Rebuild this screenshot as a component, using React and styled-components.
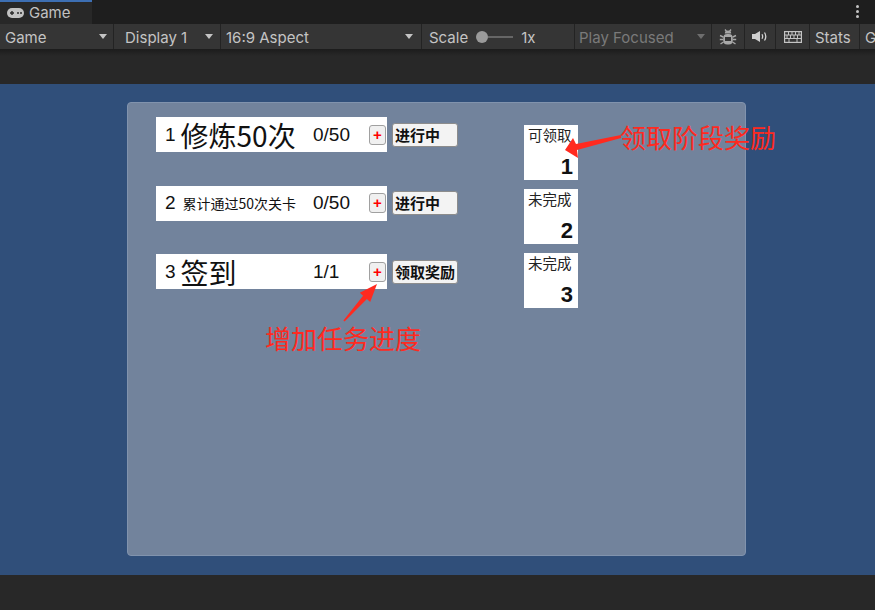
import React from 'react'
import styled, { createGlobalStyle } from 'styled-components'

const Global = createGlobalStyle`
  html, body { margin: 0; padding: 0; background: #282828; overflow: hidden; }
  #root { width: 875px; height: 610px; }
`

const Page = styled.div`
  width: 875px;
  height: 610px;
  display: flex;
  flex-direction: column;
  font-family: Inter, "Noto Sans", sans-serif;
  color: #c4c4c4;
`

const TabStrip = styled.div`
  height: 24px;
  flex: none;
  background: #1e1e1e;
  display: flex;
  justify-content: space-between;
`

const Tab = styled.div`
  width: 92px;
  box-sizing: border-box;
  border-top: 2px solid #3d6fb3;
  background: #282828;
  display: flex;
  align-items: center;
  gap: 5px;
  padding: 0 0 1px 7px;
  font-size: 15px;
  color: #c2c2c2;
`

const Kebab = styled.div`
  width: 4px;
  margin: 5px 15px 0 0;
  display: flex;
  flex-direction: column;
  gap: 2px;
  span {
    width: 3px;
    height: 3px;
    border-radius: 50%;
    background: #c4c4c4;
  }
`

const Toolbar = styled.div`
  height: 25px;
  flex: none;
  display: flex;
  gap: 1px;
  background: #232323;
`

const ToolCell = styled.div`
  width: ${p => p.$w}px;
  flex: ${p => (p.$grow ? 1 : 'none')};
  box-sizing: border-box;
  background: #353535;
  display: flex;
  align-items: center;
  justify-content: ${p => (p.$center ? 'center' : 'space-between')};
  padding: ${p => (p.$center ? 0 : 2)}px ${p => p.$pr ?? 0}px 0 ${p => p.$pl ?? 0}px;
  font-size: 15px;
  color: ${p => (p.$dim ? '#7a7a7a' : '#c4c4c4')};
  white-space: nowrap;
  overflow: hidden;
`

const DropArrow = styled.span`
  width: 0;
  height: 0;
  margin-bottom: 2px;
  border-left: 4px solid transparent;
  border-right: 4px solid transparent;
  border-top: 5px solid ${p => (p.$dim ? '#6e6e6e' : '#c4c4c4')};
`

const Slider = styled.div`
  display: flex;
  align-items: center;
  gap: 8px;
`

const Track = styled.div`
  width: 37px;
  height: 12px;
  margin-bottom: 2px;
  display: flex;
  align-items: center;
  &::before {
    content: '';
    width: 12px;
    height: 12px;
    border-radius: 50%;
    background: #9a9a9a;
    flex: none;
  }
  &::after {
    content: '';
    flex: 1;
    height: 2px;
    background: #666;
  }
`

const GapBar = styled.div`
  height: 35px;
  flex: none;
  background: linear-gradient(#1c1c1c, #282828 7px);
`

const Viewport = styled.div`
  flex: 1;
  position: relative;
  background: #304f7a;
  padding: 18px 0 0 127px;
  box-sizing: border-box;
`

const Panel = styled.div`
  width: 619px;
  height: 454px;
  box-sizing: border-box;
  border: 1px solid #8193ad;
  border-radius: 4px;
  background: #72839c;
  padding: 14px 0 0 28px;
  display: flex;
  align-items: flex-start;
`

const TaskList = styled.div`
  display: flex;
  flex-direction: column;
  gap: 33.5px;
`

const TaskRow = styled.div`
  display: flex;
  align-items: center;
  gap: 5px;
`

const TaskBox = styled.div`
  width: 231px;
  height: 35px;
  box-sizing: border-box;
  background: #fff;
  display: flex;
  align-items: center;
  padding: 0 1px 0 9px;
  color: #111;
`

const Title = styled.div`
  width: 148px;
  display: flex;
  align-items: center;
  white-space: nowrap;
`

const Index = styled.span`
  font-family: "Liberation Sans", Arial, sans-serif;
  font-size: 19px;
  margin-right: ${p => p.$gap}px;
`

const Label = styled.span`
  font-family: "Noto Sans CJK SC", sans-serif;
  font-size: ${p => p.$size}px;
  line-height: 1;
`

const Progress = styled.span`
  font-family: "Liberation Sans", Arial, sans-serif;
  font-size: 19px;
`

const PlusButton = styled.div`
  margin-left: auto;
  width: 17px;
  height: 20px;
  box-sizing: border-box;
  border: 1px solid #a0a0a0;
  border-radius: 3px;
  background: #f0f0f0;
  color: #f00;
  font-family: "Liberation Sans", Arial, sans-serif;
  font-weight: bold;
  font-size: 15px;
  line-height: 18px;
  text-align: center;
`

const StatusButton = styled.div`
  width: 66px;
  height: 24px;
  box-sizing: border-box;
  border: 1px solid #8c8c8c;
  border-radius: 3px;
  background: #f3f3f3;
  padding-left: 2px;
  font-family: "Noto Sans CJK SC", sans-serif;
  font-weight: bold;
  font-size: 15px;
  line-height: 22px;
  color: #111;
  white-space: nowrap;
`

const RewardList = styled.div`
  margin: 8px 0 0 66px;
  display: flex;
  flex-direction: column;
  gap: 9px;
`

const RewardBox = styled.div`
  width: 54px;
  height: 55px;
  box-sizing: border-box;
  background: #fff;
  padding: 1px 5px 2px 4px;
  display: flex;
  flex-direction: column;
  justify-content: space-between;
`

const RewardState = styled.span`
  font-family: "Noto Sans CJK SC", sans-serif;
  font-size: 14.5px;
  line-height: 18px;
  color: #222;
  white-space: nowrap;
`

const RewardNum = styled.span`
  align-self: flex-end;
  font-family: "Liberation Sans", Arial, sans-serif;
  font-weight: bold;
  font-size: 22px;
  line-height: 22px;
  color: #111;
`

const Note = styled.div`
  position: absolute;
  left: ${p => p.$left}px;
  top: ${p => p.$top}px;
  font-family: "Noto Sans CJK SC", sans-serif;
  font-size: 26px;
  line-height: 30px;
  color: #ff2a1f;
  white-space: nowrap;
`

const ArrowLayer = styled.svg`
  position: absolute;
  left: 0;
  top: 0;
  pointer-events: none;
`

const BottomBar = styled.div`
  height: 35px;
  flex: none;
  background: #282828;
`

const GamepadIcon = () => (
  <svg width="17" height="10" viewBox="0 0 17 10">
    <rect x="0" y="0" width="17" height="10" rx="5" fill="#c2c2c2" />
    <path d="M3 5h4M5 3v4" stroke="#282828" strokeWidth="1.4" />
    <circle cx="11" cy="5" r="1" fill="#282828" />
    <circle cx="14" cy="5" r="1" fill="#282828" />
  </svg>
)

const BugIcon = () => (
  <svg width="18" height="18" viewBox="0 0 18 18">
    <path d="M6 1.5l1.6 2M12 1.5l-1.6 2" stroke="#a8a8a8" strokeWidth="1.3" />
    <path d="M5.8 5.5a3.2 3 0 0 1 6.4 0z" fill="#a8a8a8" />
    <rect x="4.2" y="6" width="9.6" height="10.5" rx="4" fill="#a8a8a8" />
    <rect x="6" y="9" width="6" height="4" fill="#353535" />
    <path d="M1 7.5l3.2 1.5M17 7.5l-3.2 1.5M0.8 11.5h3.4M17.2 11.5h-3.4M1.5 16l3-2M16.5 16l-3-2" stroke="#a8a8a8" strokeWidth="1.4" />
  </svg>
)

const SpeakerIcon = () => (
  <svg width="16" height="11" viewBox="0 0 16 11">
    <path d="M0 3h3l5-3v11l-5-3H0z" fill="#d0d0d0" />
    <path d="M10 3.2q1.3 2.3 0 4.6M12.5 1.5q2.6 4 0 8" stroke="#d0d0d0" strokeWidth="1.3" fill="none" />
  </svg>
)

const KeyboardIcon = () => (
  <svg width="18" height="12" viewBox="0 0 18 12">
    <rect x="0.6" y="0.6" width="16.8" height="10.8" fill="none" stroke="#c4c4c4" strokeWidth="1.2" />
    <path d="M1 4h16M1 7.5h16M4.5 1v3M8 1v3M11.5 1v3M15 1v3M3 4v3.5M6.5 4v3.5M10 4v3.5M13.5 4v3.5M5 7.5v3.5M13 7.5v3.5" stroke="#c4c4c4" strokeWidth="1" />
  </svg>
)

const tasks = [
  { id: 1, label: '修炼50次', size: 28, progress: '0/50', status: '进行中' },
  { id: 2, label: '累计通过50次关卡', size: 14, progress: '0/50', status: '进行中' },
  { id: 3, label: '签到', size: 28, progress: '1/1', status: '领取奖励' },
]

const rewards = [
  { n: 1, state: '可领取' },
  { n: 2, state: '未完成' },
  { n: 3, state: '未完成' },
]

export default function App() {
  return (
    <Page>
      <Global />
      <TabStrip>
        <Tab>
          <GamepadIcon />
          Game
        </Tab>
        <Kebab>
          <span />
          <span />
          <span />
        </Kebab>
      </TabStrip>

      <Toolbar>
        <ToolCell $w={113} $pl={5} $pr={6}>Game<DropArrow /></ToolCell>
        <ToolCell $w={106} $pl={11} $pr={7}>Display 1<DropArrow /></ToolCell>
        <ToolCell $w={200} $pl={5} $pr={8}>16:9 Aspect<DropArrow /></ToolCell>
        <ToolCell $w={152} $pl={7}>
          <Slider>
            Scale
            <Track />
            1x
          </Slider>
          <span />
        </ToolCell>
        <ToolCell $w={136} $pl={4} $pr={6} $dim>Play Focused<DropArrow $dim /></ToolCell>
        <ToolCell $w={32} $center><BugIcon /></ToolCell>
        <ToolCell $w={30} $center><SpeakerIcon /></ToolCell>
        <ToolCell $w={33} $center><KeyboardIcon /></ToolCell>
        <ToolCell $w={49} $pl={5}>Stats</ToolCell>
        <ToolCell $grow $pl={5}>G</ToolCell>
      </Toolbar>

      <GapBar />

      <Viewport>
        <Panel>
          <TaskList>
            {tasks.map(t => (
              <TaskRow key={t.id}>
                <TaskBox>
                  <Title>
                    <Index $gap={t.size > 20 ? 5 : 7}>{t.id}</Index>
                    <Label $size={t.size}>{t.label}</Label>
                  </Title>
                  <Progress>{t.progress}</Progress>
                  <PlusButton>+</PlusButton>
                </TaskBox>
                <StatusButton>{t.status}</StatusButton>
              </TaskRow>
            ))}
          </TaskList>
          <RewardList>
            {rewards.map(r => (
              <RewardBox key={r.n}>
                <RewardState>{r.state}</RewardState>
                <RewardNum>{r.n}</RewardNum>
              </RewardBox>
            ))}
          </RewardList>
        </Panel>

        <ArrowLayer width="875" height="491" viewBox="0 84 875 491">
          <polygon points="565,150 573,138 576,144 621,135 621,138 577,150 578,158" fill="#ff2a1f" />
          <polygon points="377,284 359.8,292.7 363.1,295.7 343.4,320.5 344.6,321.5 366.9,299.1 370.2,302.1" fill="#ff2a1f" />
        </ArrowLayer>
        <Note $left={620} $top={38}>领取阶段奖励</Note>
        <Note $left={265} $top={239}>增加任务进度</Note>
      </Viewport>

      <BottomBar />
    </Page>
  )
}
